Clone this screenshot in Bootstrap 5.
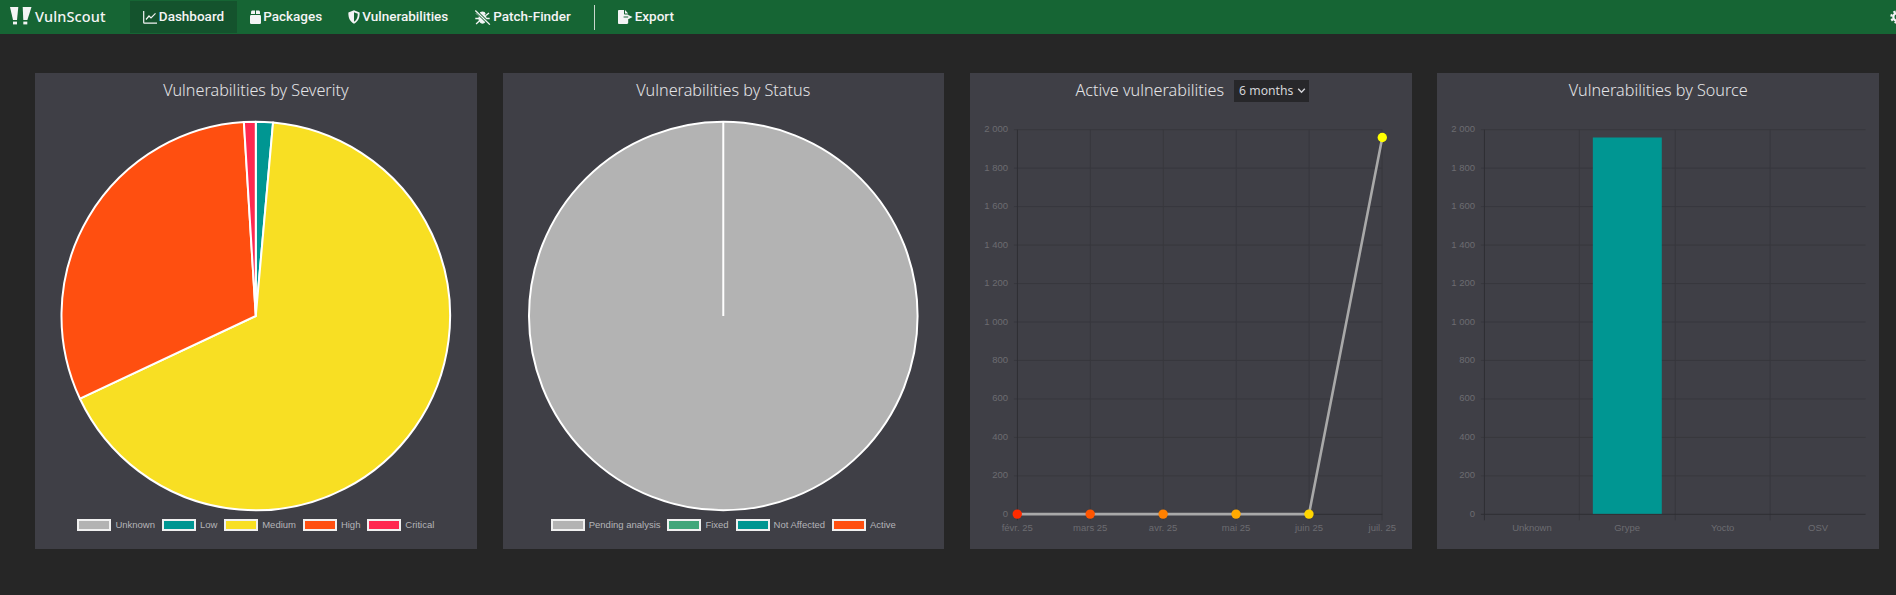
<!DOCTYPE html>
<html lang="en">
<head>
<meta charset="utf-8">
<title>VulnScout</title>
<link rel="stylesheet" href="https://cdn.jsdelivr.net/npm/bootstrap@5.3.0/dist/css/bootstrap.min.css">
<style>
html,body{height:100%;}
body{background:#262626;overflow:hidden;font-family:"Noto Sans",sans-serif;}
.vs-bar{background:#166534;height:34px;padding:0;flex-wrap:nowrap;overflow:hidden;}
.vs-brand{display:flex;align-items:center;gap:3px;margin:0 24px 0 10px;padding:0;color:#f4f4f5;font-size:14.5px;font-weight:500;letter-spacing:.15px;}
.vs-brand svg{margin-top:-2px;}
.vs-brand:hover{color:#fff;}
.vs-bar .navbar-nav .vs-link{display:flex;align-items:center;gap:2px;height:32px;padding:0 13px;color:#f4f4f5;font-family:Roboto,sans-serif;font-size:13.5px;font-weight:500;line-height:1;white-space:nowrap;}
.vs-bar .navbar-nav .vs-link.active{background:#14532d;}
.vs-sep{width:1px;height:25px;background:#c9d6cd;margin:0 9.300px 0 10.700px;}
.vs-gear{margin-left:auto;margin-right:-8px;display:flex;}
.vs-main{display:grid;grid-template-columns:repeat(4,1fr);column-gap:25.9px;padding:39px 17px 0 35.1px;}
.vs-panel{background:#3f3f46;height:476px;display:flex;flex-direction:column;}
.vs-title{height:34px;flex:none;display:flex;align-items:center;justify-content:center;gap:10px;margin:0;padding-top:1px;color:#e4e4e7;font-size:16.2px;font-weight:300;}
.vs-title-tools{padding-left:3px;}
.vs-select{width:75px;height:22px;padding:0 0 0 5px;border:0;border-radius:0;background-color:#27272a;background-image:url("data:image/svg+xml,%3csvg xmlns='http://www.w3.org/2000/svg' viewBox='0 0 10 10'%3e%3cpath fill='none' stroke='%23d4d4d8' stroke-width='1.3' d='M2 3.500L5 6.500 8 3.500'/%3e%3c/svg%3e");background-position:right 2px center;background-size:11px 11px;color:#d4d4d8;font-size:12.2px;line-height:22px;font-family:"Noto Sans",sans-serif;}
.vs-chart{display:block;flex:none;width:100%;}
.vs-legend{height:26px;display:flex;justify-content:center;align-items:center;gap:6.9px;font-family:"Liberation Sans",sans-serif;font-size:9.5px;color:#b4b4b8;}
.vs-key{display:flex;align-items:center;gap:4px;white-space:nowrap;}
.vs-swatch{width:34px;height:12px;border:2px solid #f0f0f0;}
.s-grey{background:#b3b3b3;}.s-teal{background:#009692;}.s-yellow{background:#f8df23;}.s-orange{background:#ff4f10;}.s-red{background:#ff2850;}.s-green{background:#41a67a;}
.grid-line{stroke:#37373d;stroke-width:1;}
.axis-line{stroke:#2e2e33;stroke-width:1;}
.tick-text{font-family:"Liberation Sans",sans-serif;font-size:9.5px;fill:#6c6c71;}
.pie-edge{stroke:#fff;stroke-width:2;stroke-linejoin:round;}
</style>
</head>
<body>
<nav class="navbar navbar-expand vs-bar">
  <a class="navbar-brand vs-brand" href="#">
    <svg width="22" height="18" viewBox="0 0 22 18" fill="#f4f4f5"><path d="M0 0H8.300L7 13H3Z"/><rect x="3" y="14.600" width="4" height="2.800"/><path d="M12.700 0H21.500L17.400 13H13.300Z"/><rect x="13.300" y="14.600" width="4" height="2.800"/></svg>
    VulnScout
  </a>
  <ul class="navbar-nav align-items-center">
    <li class="nav-item"><a class="nav-link vs-link active" href="#">
      <svg width="14" height="14" viewBox="0 0 14 14" fill="none" stroke="#f4f4f5" stroke-width="1.2"><path d="M.7 1V12.6C.7 13 .9 13.2 1.3 13.2H14"/><path d="M3 9.5L6 6 8 8 12.5 3.4"/></svg>
      Dashboard</a></li>
    <li class="nav-item"><a class="nav-link vs-link" href="#">
      <svg width="11" height="14" viewBox="0 0 11 14" fill="#f4f4f5"><rect x="0" y="5" width="11" height="9" rx="1.2"/><path d="M1 4V2.3C1 1.2 1.6.6 2.600.6H5V4Z"/><path d="M6 4V.6H8.400C9.400.6 10 1.2 10 2.3V4Z"/></svg>
      Packages</a></li>
    <li class="nav-item"><a class="nav-link vs-link" href="#">
      <svg width="12" height="14" viewBox="0 0 12 14"><path d="M6 .3L11.6 2.5C11.8 7 10.6 11.3 6 13.7 1.4 11.3.2 7 .4 2.5Z" fill="#f4f4f5"/><path d="M6 2.3L9.8 3.8C9.8 7 9 10 6 11.7Z" fill="#166534"/></svg>
      Vulnerabilities</a></li>
    <li class="nav-item"><a class="nav-link vs-link" href="#">
      <svg width="17" height="15" viewBox="0 0 16 15" fill="none" stroke="#f4f4f5" stroke-width="1.3"><ellipse cx="8" cy="8.6" rx="3.4" ry="4.4" fill="#f4f4f5"/><path d="M5.6 3.6C6 1.6 10 1.6 10.400 3.6Z" fill="#f4f4f5"/><path d="M1.5 3L4.6 5.6M14.5 3L11.4 5.6M.8 8.5H4.6M15.2 8.500H11.4M1.6 14L4.800 11M14.400 14L11.200 11"/><path d="M.8.5L15.400 14.600" stroke="#166534" stroke-width="3"/><path d="M.8.5L15.400 14.600"/></svg>
      Patch-Finder</a></li>
    <li class="vs-sep" aria-hidden="true"></li>
    <li class="nav-item"><a class="nav-link vs-link" href="#">
      <svg width="15" height="14" viewBox="0 0 15 14" fill="#f4f4f5"><path d="M.8 0H6V3.6C6 4.2 6.4 4.6 7 4.6H10.2V6.4H5.6V7.6H10.2V12.8C10.2 13.5 9.7 14 9 14H.8C.3 14 0 13.6 0 13V.9C0 .3.3 0 .8 0ZM7 0L10.2 3.5H7ZM10.2 6.4V4.9L14.6 7 10.2 9.2V7.6Z"/></svg>
      Export</a></li>
  </ul>
  <span class="vs-gear">
    <svg width="14" height="14" viewBox="0 0 16 16" fill="none" stroke="#f4f4f5"><circle cx="8" cy="8" r="4.2" stroke-width="2.6"/><circle cx="8" cy="8" r="6.4" stroke-width="2.6" stroke-dasharray="2.6 2.43"/></svg>
  </span>
</nav>

<main class="vs-main">
  <section class="vs-panel">
    <h2 class="vs-title">Vulnerabilities by Severity</h2>
    <svg class="vs-chart" viewBox="0 0 442 405" height="405">
      <g class="pie-edge">
        <path d="M221 209L221 14.5A194.5 194.5 0 0 1 238.3 15.3Z" fill="#009692"/>
        <path d="M221 209L238.3 15.3A194.5 194.5 0 1 1 45 291.8Z" fill="#f8df23"/>
        <path d="M221 209L45 291.8A194.5 194.5 0 0 1 209.1 14.9Z" fill="#ff4f10"/>
        <path d="M221 209L209.1 14.9A194.5 194.5 0 0 1 221 14.5Z" fill="#ff2850"/>
      </g>
    </svg>
    <div class="vs-legend">
      <span class="vs-key"><i class="vs-swatch s-grey"></i>Unknown</span>
      <span class="vs-key"><i class="vs-swatch s-teal"></i>Low</span>
      <span class="vs-key"><i class="vs-swatch s-yellow"></i>Medium</span>
      <span class="vs-key"><i class="vs-swatch s-orange"></i>High</span>
      <span class="vs-key"><i class="vs-swatch s-red"></i>Critical</span>
    </div>
  </section>

  <section class="vs-panel">
    <h2 class="vs-title">Vulnerabilities by Status</h2>
    <svg class="vs-chart" viewBox="0 0 442 405" height="405">
      <circle class="pie-edge" cx="220.500" cy="209" r="194.5" fill="#b3b3b3"/>
      <path class="pie-edge" d="M220.500 209V14.5"/>
    </svg>
    <div class="vs-legend">
      <span class="vs-key"><i class="vs-swatch s-grey"></i>Pending analysis</span>
      <span class="vs-key"><i class="vs-swatch s-green"></i>Fixed</span>
      <span class="vs-key"><i class="vs-swatch s-teal"></i>Not Affected</span>
      <span class="vs-key"><i class="vs-swatch s-orange"></i>Active</span>
    </div>
  </section>

  <section class="vs-panel">
    <h2 class="vs-title vs-title-tools">Active vulnerabilities
      <select class="form-select vs-select" aria-label="Period"><option>6 months</option><option>12 months</option><option>24 months</option></select>
    </h2>
    <svg class="vs-chart" viewBox="0 0 442 442" height="442">
      <g class="grid-line">
        <path d="M44 22.5H412.7M44 61H412.7M44 99.5H412.7M44 138H412.7M44 176.5H412.7M44 215H412.7M44 253.5H412.7M44 292H412.7M44 330.5H412.7M44 369H412.7"/>
        <path d="M120.5 22.5V413.5M193.5 22.5V413.5M266.5 22.5V413.5M339.5 22.5V413.5M412.5 22.5V413.5"/>
      </g>
      <g class="axis-line"><path d="M47.5 22.5V413.5M44 407.5H412.7"/></g>
      <g class="tick-text" text-anchor="end">
        <text x="38" y="25">2 000</text><text x="38" y="63.5">1 800</text><text x="38" y="102">1 600</text><text x="38" y="140.5">1 400</text><text x="38" y="179">1 200</text><text x="38" y="217.500">1 000</text><text x="38" y="256">800</text><text x="38" y="294.500">600</text><text x="38" y="333">400</text><text x="38" y="371.500">200</text><text x="38" y="410">0</text>
      </g>
      <g class="tick-text" text-anchor="middle">
        <text x="47.3" y="424.300">févr. 25</text><text x="120.300" y="424.300">mars 25</text><text x="193.300" y="424.300">avr. 25</text><text x="266.300" y="424.300">mai 25</text><text x="339.300" y="424.300">juin 25</text><text x="412.700" y="424.300">juil. 25</text>
      </g>
      <polyline points="47.3,407.3 120.3,407.3 193.3,407.3 266.3,407.3 339.3,407.3 412.7,30.3" fill="none" stroke="#a9a9a9" stroke-width="2.6"/>
      <circle cx="47.3" cy="407.3" r="4.7" fill="#ff2b00"/><circle cx="120.3" cy="407.3" r="4.7" fill="#ff5500"/><circle cx="193.3" cy="407.3" r="4.7" fill="#ff8000"/><circle cx="266.3" cy="407.3" r="4.7" fill="#ffaa00"/><circle cx="339.3" cy="407.3" r="4.7" fill="#ffd500"/><circle cx="412.7" cy="30.3" r="4.7" fill="#ffff00"/>
    </svg>
  </section>

  <section class="vs-panel">
    <h2 class="vs-title">Vulnerabilities by Source</h2>
    <svg class="vs-chart" viewBox="0 0 442 442" height="442">
      <g class="grid-line">
        <path d="M44 22.5H429M44 61H429M44 99.5H429M44 138H429M44 176.5H429M44 215H429M44 253.5H429M44 292H429M44 330.5H429M44 369H429"/>
        <path d="M142.500 22.5V413.5M238.500 22.5V413.5M333.500 22.5V413.5"/>
      </g>
      <g class="axis-line"><path d="M47.5 22.5V413.5M44 407.5H429"/></g>
      <g class="tick-text" text-anchor="end">
        <text x="38" y="25">2 000</text><text x="38" y="63.5">1 800</text><text x="38" y="102">1 600</text><text x="38" y="140.5">1 400</text><text x="38" y="179">1 200</text><text x="38" y="217.500">1 000</text><text x="38" y="256">800</text><text x="38" y="294.500">600</text><text x="38" y="333">400</text><text x="38" y="371.500">200</text><text x="38" y="410">0</text>
      </g>
      <g class="tick-text" text-anchor="middle">
        <text x="95" y="424.300">Unknown</text><text x="190.300" y="424.300">Grype</text><text x="286" y="424.300">Yocto</text><text x="381.500" y="424.300">OSV</text>
      </g>
      <rect x="156" y="30.3" width="69" height="376.7" fill="#009692"/>
    </svg>
  </section>
</main>
<script src="https://cdn.jsdelivr.net/npm/bootstrap@5.3.0/dist/js/bootstrap.bundle.min.js"></script>
</body>
</html>
